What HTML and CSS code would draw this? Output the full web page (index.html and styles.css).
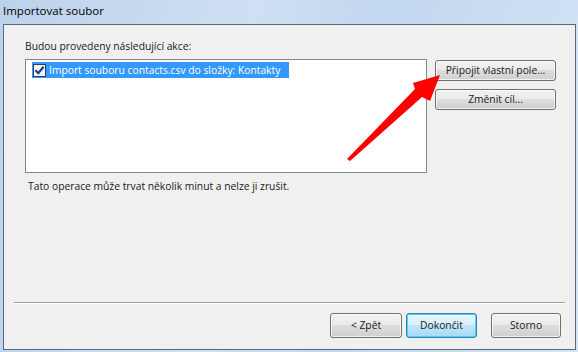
FILE: index.html
```html
<!DOCTYPE html>
<html>
<head>
<meta charset="utf-8">
<link rel="stylesheet" href="styles.css">
</head>
<body>
<div class="window">
  <div class="titlebar">Importovat soubor</div>
  <div class="client">
    <div class="main">
      <div class="left">
        <div class="label">Budou provedeny následující akce:</div>
        <div class="listbox">
          <div class="row selected">
            <span class="checkbox"><svg width="11" height="11" viewBox="0 0 11 11"><path d="M1.5 5.3 L4.3 8.2 L9.6 1.8" fill="none" stroke="#1e3f7a" stroke-width="2.2"/></svg></span>
            <span class="rowtext">Import souboru contacts.csv do složky: Kontakty</span>
          </div>
        </div>
        <div class="note">Tato operace může trvat několik minut a nelze ji zrušit.</div>
      </div>
      <div class="side">
        <button class="btn wide">Připojit vlastní pole...</button>
        <button class="btn wide">Změnit cíl...</button>
      </div>
    </div>
    <div class="separator"></div>
    <div class="footer">
      <button class="btn back">&lt; Zpět</button>
      <button class="btn default">Dokončit</button>
      <button class="btn storno">Storno</button>
    </div>
    <svg class="arrow" width="578" height="352" viewBox="0 0 578 352">
      <polygon points="350,161 422,97 430,101 440,75 413,83 415,89 347,159" fill="#ff0000"/>
    </svg>
  </div>
</div>
</body>
</html>
```

FILE: styles.css
```css
html, body {
  margin: 0;
  padding: 0;
}
body {
  width: 578px;
  height: 352px;
  overflow: hidden;
  font-family: "Open Sans", "DejaVu Sans", sans-serif;
  font-size: 10.3px;
  color: #1a1a1a;
  background: linear-gradient(100deg, #bcd2ea 0%, #cfe0f3 40%, #c2d8ef 60%, #d3e4f5 100%);
}
.window {
  height: 352px;
  display: flex;
  flex-direction: column;
}
.titlebar {
  height: 24px;
  line-height: 22px;
  padding-left: 3px;
  font-size: 11.5px;
  color: #000;
  box-sizing: border-box;
}
.client {
  position: relative;
  margin: 0 2px 2px 3px;
  flex: 1;
  border: 1px solid #59687a;
  background: #f0f0f0;
  display: flex;
  flex-direction: column;
}
.main {
  display: flex;
  padding: 14px 0 0 21px;
  height: 277px;
  box-sizing: border-box;
}
.left {
  display: flex;
  flex-direction: column;
}
.label {
  height: 20px;
  line-height: 14px;
}
.listbox {
  width: 402px;
  height: 114px;
  border: 1px solid #828790;
  background: #fff;
  padding: 2px 0 0 6px;
  box-sizing: border-box;
}
.row {
  display: flex;
  align-items: center;
  height: 16px;
}
.row.selected {
  background: #3399ff;
  color: #fff;
  width: 257px;
}
.checkbox {
  width: 11px;
  height: 11px;
  border: 1px solid #2c3e5c;
  background: #eef3fa;
  margin: 0 3px 0 1px;
  display: flex;
}
.rowtext {
  line-height: 16px;
  white-space: nowrap;
}
.note {
  margin-top: 6px;
  padding-left: 3px;
  line-height: 14px;
}
.side {
  display: flex;
  flex-direction: column;
  gap: 8px;
  margin-left: 8px;
  padding-top: 21px;
}
.btn {
  font-family: inherit;
  font-size: 10.3px;
  color: #1a1a1a;
  height: 21px;
  border: 1px solid #707070;
  border-radius: 3px;
  background: linear-gradient(#f2f2f2 0%, #ebebeb 45%, #dddddd 50%, #cfcfcf 100%);
  box-shadow: inset 0 0 0 1px rgba(255,255,255,0.7);
  padding: 0;
  line-height: 17px;
}
.btn.wide {
  width: 121px;
}
.separator {
  margin: 0 10px 0 10px;
  height: 1px;
  background: #a0a0a0;
  border-bottom: 1px solid #ffffff;
}
.footer {
  display: flex;
  justify-content: flex-end;
  padding: 9px 14px 0 0;
  gap: 4px;
}
.footer .btn {
  width: 71px;
  height: 25px;
}
.footer .btn.back {
  width: 72px;
}
.footer .btn.default {
  border-color: #3c7fb1;
  background: linear-gradient(#eaf6fd 0%, #d9f0fc 45%, #bee6fd 50%, #a7d9f5 100%);
  box-shadow: inset 0 0 0 1px #48d1fa;
}
.footer .btn.storno {
  margin-left: 10px;
  width: 70px;
}
.arrow {
  position: absolute;
  left: -4px;
  top: -25px;
  pointer-events: none;
}
```
